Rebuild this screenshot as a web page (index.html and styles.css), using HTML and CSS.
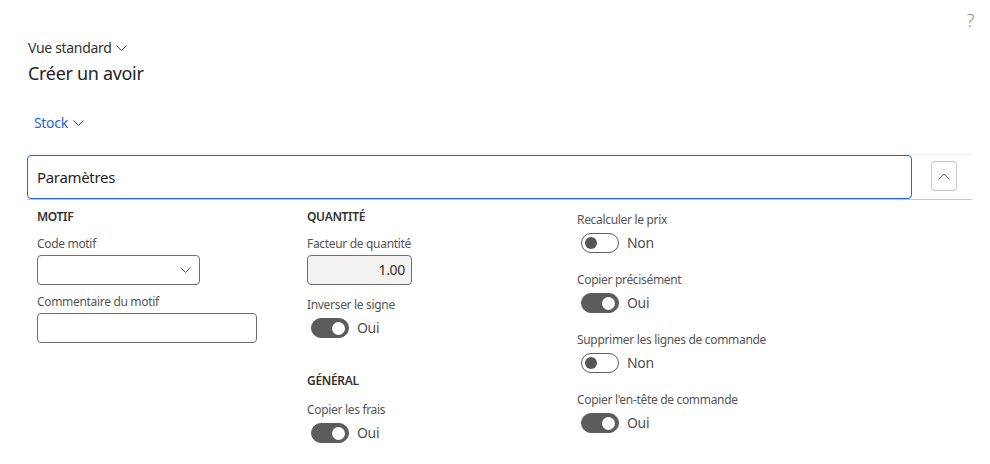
FILE: index.html
```html
<!DOCTYPE html>
<html lang="fr">
<head>
<meta charset="utf-8">
<title>Créer un avoir</title>
<link rel="stylesheet" href="styles.css">
</head>
<body>
<div class="topbar"><span class="help">?</span></div>
<div class="page">
  <div class="view">Vue standard <svg class="chev" width="11" height="6" viewBox="0 0 11 6"><path d="M0.5 0.5 L5.5 5.5 L10.5 0.5" fill="none" stroke="#444" stroke-width="1"/></svg></div>
  <h1 class="title">Créer un avoir</h1>
  <div class="tabs"><span class="tab">Stock <svg class="chev" width="11" height="6" viewBox="0 0 11 6"><path d="M0.5 0.5 L5.5 5.5 L10.5 0.5" fill="none" stroke="#444" stroke-width="1"/></svg></span></div>
</div>
<section class="section">
  <div class="section-head">
    <div class="section-title">Paramètres</div>
    <button class="collapse" type="button"><svg width="12" height="7" viewBox="0 0 12 7"><path d="M0.5 6.5 L6 1 L11.5 6.5" fill="none" stroke="#666" stroke-width="1"/></svg></button>
  </div>
  <div class="section-body">
    <div class="col">
      <div class="group-title">MOTIF</div>
      <div class="field">
        <label class="lbl">Code motif</label>
        <div class="select"><svg width="11" height="6" viewBox="0 0 11 6"><path d="M0.5 0.5 L5.5 5.5 L10.5 0.5" fill="none" stroke="#555" stroke-width="1"/></svg></div>
      </div>
      <div class="field">
        <label class="lbl">Commentaire du motif</label>
        <div class="input comment"></div>
      </div>
    </div>
    <div class="col">
      <div class="group-title">QUANTITÉ</div>
      <div class="field">
        <label class="lbl">Facteur de quantité</label>
        <div class="input qty">1.00</div>
      </div>
      <div class="tfield first">
        <label class="lbl">Inverser le signe</label>
        <div class="toggle"><span class="switch on"><span class="thumb"></span></span><span class="tval">Oui</span></div>
      </div>
      <div class="group-title general">GÉNÉRAL</div>
      <div class="tfield">
        <label class="lbl">Copier les frais</label>
        <div class="toggle"><span class="switch on"><span class="thumb"></span></span><span class="tval">Oui</span></div>
      </div>
    </div>
    <div class="col col3">
      <div class="tfield">
        <label class="lbl">Recalculer le prix</label>
        <div class="toggle"><span class="switch"><span class="thumb"></span></span><span class="tval">Non</span></div>
      </div>
      <div class="tfield">
        <label class="lbl">Copier précisément</label>
        <div class="toggle"><span class="switch on"><span class="thumb"></span></span><span class="tval">Oui</span></div>
      </div>
      <div class="tfield">
        <label class="lbl">Supprimer les lignes de commande</label>
        <div class="toggle"><span class="switch"><span class="thumb"></span></span><span class="tval">Non</span></div>
      </div>
      <div class="tfield">
        <label class="lbl">Copier l'en-tête de commande</label>
        <div class="toggle"><span class="switch on"><span class="thumb"></span></span><span class="tval">Oui</span></div>
      </div>
    </div>
  </div>
</section>
</body>
</html>
```
FILE: styles.css
```css
* { box-sizing: border-box; }
html, body { margin: 0; padding: 0; background: #fff; }
body {
  font-family: "Noto Sans", "Open Sans", sans-serif;
  color: #323130;
  letter-spacing: -0.02em;
}
.topbar {
  height: 38px;
  display: flex;
  justify-content: flex-end;
  padding-right: 16px;
}
.help {
  display: block;
  margin-top: 10px;
  font-size: 18px;
  line-height: 20px;
  color: #888;
  font-weight: 300;
}
.page { padding-left: 28px; }
.view {
  font-size: 14px;
  line-height: 20px;
  color: #333;
  display: flex;
  align-items: center;
}
.view .chev { margin-left: 5px; margin-top: -1px; }
.title {
  margin: 3px 0 0;
  font-size: 18px;
  line-height: 24px;
  font-weight: 400;
  color: #252423;
}
.tabs { margin-top: 26px; padding-left: 6px; }
.tab {
  display: inline-flex;
  align-items: center;
  font-size: 14px;
  line-height: 20px;
  color: #2266e3;
}
.tab .chev { margin-left: 5px; }
.section {
  margin: 21px 0 0 27px;
  width: 945px;
}
.section-head {
  display: flex;
  border-top: 1px solid #f0f0f0;
  border-bottom: 1px solid #c8c6c4;
  height: 46px;
}
.section-title {
  width: 885px;
  height: 44px;
  border: 1px solid #2266e3;
  border-radius: 4px;
  padding-left: 9px;
  display: flex;
  align-items: center;
  font-size: 15px;
  color: #252423;
}
.collapse {
  margin: 6px 0 0 19px;
  width: 26px;
  height: 30px;
  border: 1px solid #c8c6c4;
  border-radius: 3px;
  background: #fff;
  padding: 0;
  display: flex;
  align-items: center;
  justify-content: center;
}
.section-body {
  display: flex;
  padding: 9px 0 0 10px;
}
.col { width: 270px; display: flex; flex-direction: column; align-items: flex-start; }
.col3 { padding-top: 3px; }
.group-title {
  font-size: 12px;
  line-height: 16px;
  font-weight: 600;
  color: #323130;
  margin-bottom: 11px;
}
.group-title.general { margin-top: 35px; margin-bottom: 13px; }
.lbl {
  display: block;
  font-size: 12px;
  line-height: 16px;
  color: #555;
}
.field { margin-bottom: 9px; }
.field .lbl { margin-bottom: 3px; }
.select, .input {
  height: 30px;
  border: 1px solid #6e6e6e;
  border-radius: 4px;
}
.select {
  width: 163px;
  display: flex;
  align-items: center;
  justify-content: flex-end;
  padding-right: 8px;
}
.comment { width: 220px; }
.qty {
  width: 105px;
  background: #f3f2f1;
  text-align: right;
  font-size: 14px;
  line-height: 28px;
  padding-right: 6px;
  color: #323130;
}
.tfield { margin-bottom: 19px; }
.tfield.first { margin-top: 3px; margin-bottom: 0; }
.tfield .lbl { margin-bottom: 5px; }
.toggle {
  display: flex;
  align-items: center;
  margin-left: 4px;
  height: 20px;
}
.switch {
  width: 38px;
  height: 20px;
  border-radius: 10px;
  border: 1px solid #605e5c;
  display: flex;
  align-items: center;
  padding: 0 3px;
}
.switch .thumb {
  width: 12px;
  height: 12px;
  border-radius: 50%;
  background: #555;
}
.switch.on {
  background: #5c5c5c;
  border-color: #5c5c5c;
  justify-content: flex-end;
}
.switch.on .thumb { background: #fff; width: 13px; height: 13px; }
.tval {
  margin-left: 8px;
  font-size: 14px;
  line-height: 20px;
  color: #505050;
}
```
